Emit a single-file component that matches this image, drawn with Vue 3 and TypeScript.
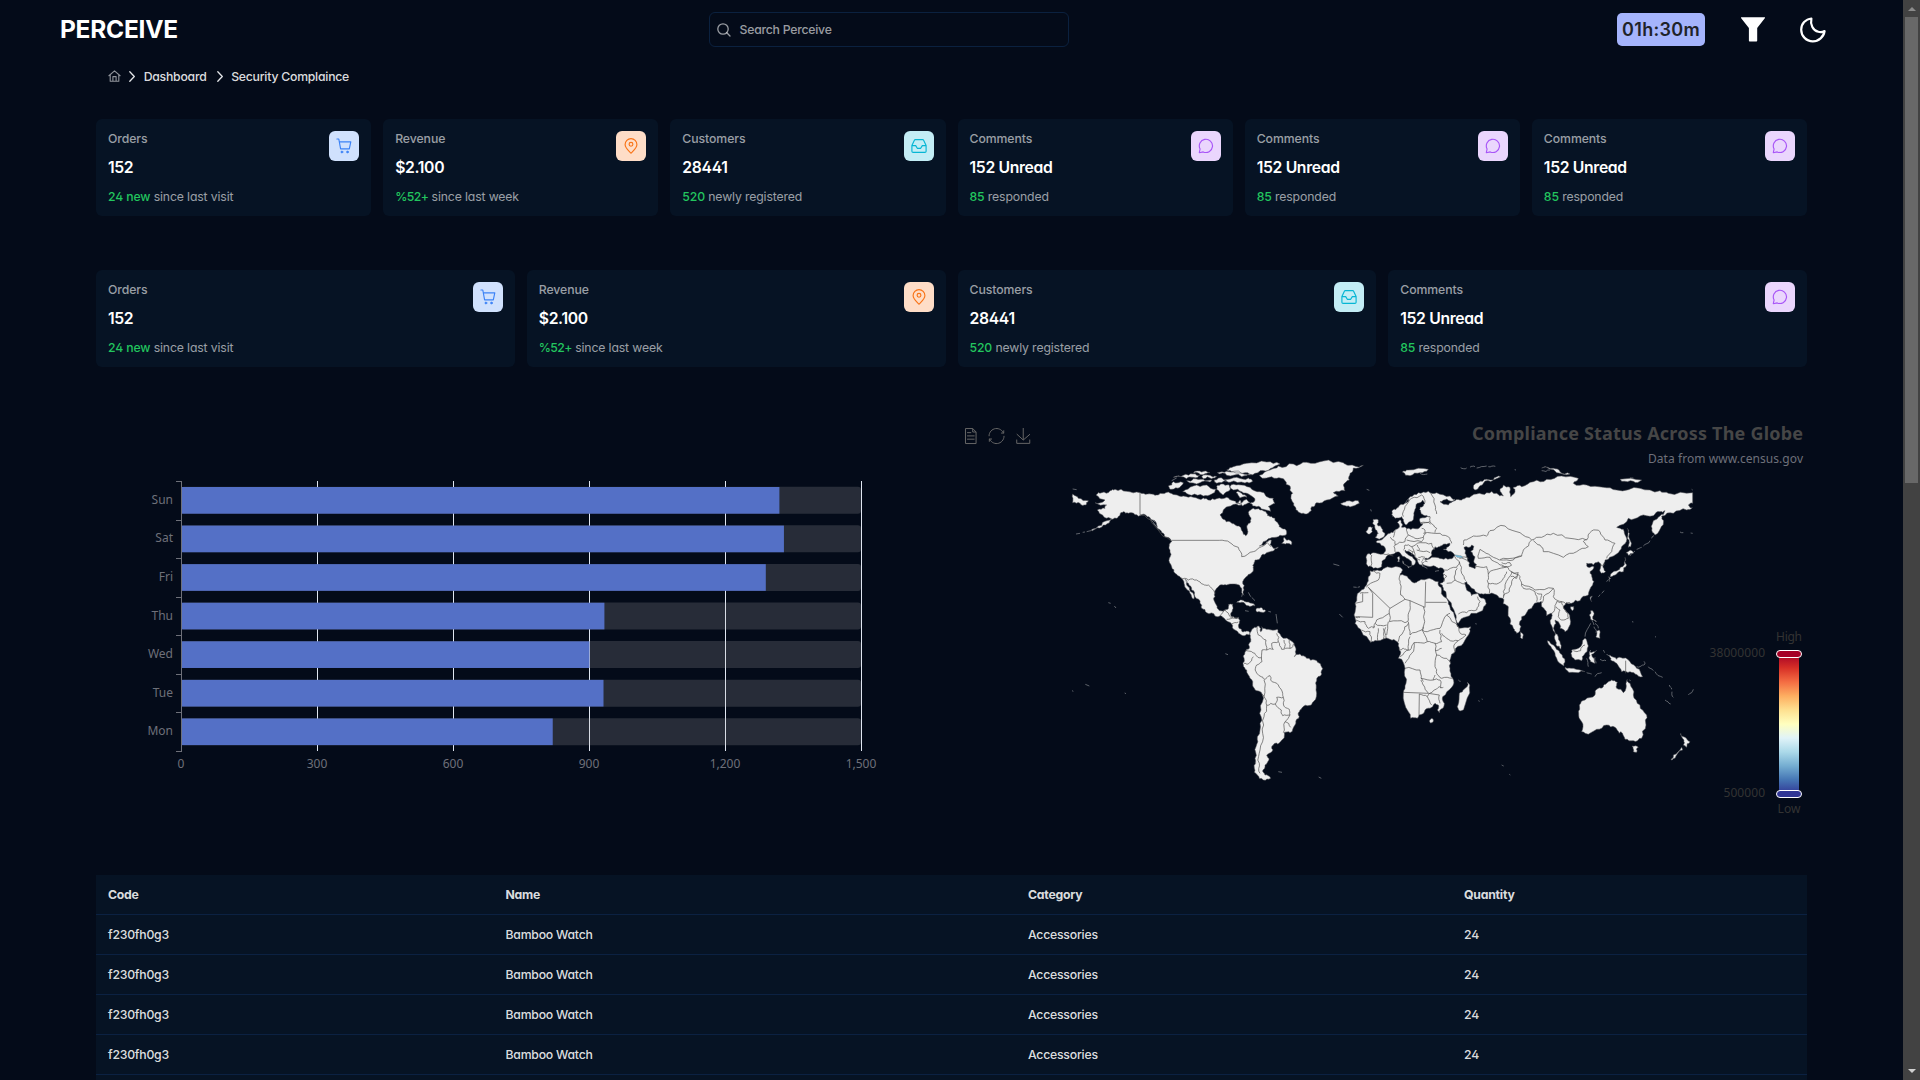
<script setup lang="ts">
type IconName = 'cart' | 'pin' | 'inbox' | 'comment'

interface Stat {
  label: string
  value: string
  strong: string
  rest: string
  icon: IconName
}

const orders: Stat = { label: 'Orders', value: '152', strong: '24 new', rest: 'since last visit', icon: 'cart' }
const revenue: Stat = { label: 'Revenue', value: '$2.100', strong: '%52+', rest: 'since last week', icon: 'pin' }
const customers: Stat = { label: 'Customers', value: '28441', strong: '520', rest: 'newly registered', icon: 'inbox' }
const comments: Stat = { label: 'Comments', value: '152 Unread', strong: '85', rest: 'responded', icon: 'comment' }

const statRows: Stat[][] = [
  [orders, revenue, customers, comments, comments, comments],
  [orders, revenue, customers, comments],
]

const week = [
  { day: 'Sun', value: 1320 },
  { day: 'Sat', value: 1330 },
  { day: 'Fri', value: 1290 },
  { day: 'Thu', value: 934 },
  { day: 'Wed', value: 901 },
  { day: 'Tue', value: 932 },
  { day: 'Mon', value: 820 },
]
const ticks = ['0', '300', '600', '900', '1,200', '1,500']
const band = 270 / 7
const plotX = 85
const plotY = 61

const products = Array.from({ length: 4 }, () => ({
  code: 'f230fh0g3',
  name: 'Bamboo Watch',
  category: 'Accessories',
  quantity: 24,
}))

// Map geometry: "x,y x,y ..." rings; west and east halves use their own origin.
const westLand = [
  '108,135 125,128 150,122 165,118 200,124 240,128 262,132 285,136 300,130 325,126 345,134 370,138 400,142 430,144 445,150 470,146 500,142 520,152 530,160 540,150 545,165 512,168 490,180 480,195 490,208 510,215 525,224 540,230 548,245 557,257 562,240 560,228 572,215 570,200 565,188 572,180 580,175 600,180 620,190 630,200 645,205 655,222 665,235 680,245 678,255 655,260 630,265 610,275 598,288 620,275 635,272 630,285 640,295 655,292 640,303 620,308 605,315 600,325 585,330 578,345 580,360 570,372 555,385 548,395 552,420 552,436 545,428 538,405 520,402 500,405 480,405 468,418 465,440 466,460 475,478 490,484 503,478 506,463 518,462 517,480 512,492 515,500 535,502 538,520 537,535 548,546 560,543 570,548 568,554 555,557 540,552 525,540 515,522 495,508 480,497 465,498 440,488 425,475 420,460 405,440 395,420 385,400 375,388 380,405 392,425 402,447 395,440 382,420 372,400 363,384 345,370 335,350 328,325 330,300 328,283 335,275 320,262 310,250 298,238 290,225 278,210 262,200 245,194 225,194 205,190 190,185 180,195 170,205 150,213 130,225 105,238 90,243 125,226 150,210 155,207 135,203 118,190 112,180 135,175 140,165 105,158 135,150',
  '598,76 630,60 655,48 700,42 740,37 790,33 850,38 865,46 910,46 880,54 870,70 868,90 850,105 855,122 820,128 835,138 800,150 770,158 755,170 745,190 735,192 715,186 705,170 695,150 698,130 690,108 675,92 650,85 620,84',
  '842,160 860,153 895,152 898,160 870,171 850,166',
  '500,60 520,50 560,40 620,36 660,42 630,56 600,62 585,70 555,68 520,66',
  '472,68 500,64 545,70 575,74 545,80 500,76',
  '510,110 535,104 570,112 600,125 640,145 645,160 625,170 632,184 610,178 590,170 570,160 585,150 570,135 545,125 520,120',
  '368,125 400,108 440,105 467,118 455,132 430,138 395,136',
  '325,108 340,95 370,98 360,112 335,118',
  '340,82 370,76 400,72 420,74 400,82 380,86',
  '400,70 425,66 450,68 430,74',
  '380,92 400,86 430,88 455,90 450,96 420,98',
  '425,80 450,76 470,80 455,86 430,86',
  '462,90 490,88 500,94 470,100',
  '470,108 485,102 505,104 510,120 490,135 478,125',
  '490,88 530,82 565,84 578,94 555,99 510,97',
  '530,158 560,148 570,158 548,168',
  '528,128 545,130 560,142 540,144',
  '665,280 672,262 692,272 694,284 680,280',
  '38,132 55,145 85,152 78,165 60,160 38,158',
  '530,457 545,450 565,456 585,468 565,467 550,457',
  '590,475 605,473 617,482 600,486 588,483',
  '568,550 580,535 597,528 602,545 605,530 625,538 652,538 660,552 670,565 690,570 702,580 708,600 703,620 720,612 740,625 765,630 782,642 788,655 785,672 770,692 768,720 760,755 750,766 725,775 718,785 716,805 705,825 690,848 672,848 673,862 660,877 645,880 635,892 635,905 620,915 627,930 615,945 608,962 615,975 632,985 610,990 592,975 583,955 585,925 588,890 592,860 600,820 603,780 606,732 590,722 578,708 570,685 560,660 550,645 553,632 555,605 568,595 572,575',
]
const westBorders = [
  '592,532 595,555 618,570 620,600', '555,603 575,605 590,618 606,625', '552,640 565,642 580,620',
  '620,600 640,598 635,580 655,575 650,550', '655,575 665,598 690,595 702,580', '672,570 672,596', '688,570 690,595',
  '620,600 606,600 606,635 590,645 588,665 600,678 612,688 630,677 632,690 655,705 668,730 670,742 650,742 646,762 620,766 612,740 612,690',
  '606,732 612,740', '620,766 612,800 608,850 600,900 598,940 600,970',
  '670,742 670,762 688,778 690,795 668,797 664,780 646,762', '690,795 675,815 692,832', '675,815 670,848',
  '478,271 510,278 535,292 545,320 580,305 605,290 622,278 632,290', '240,194 262,205 290,235 320,262 335,275',
  '363,384 385,390 410,390 430,403 445,405 465,430', '480,497 495,480 510,500 535,505', '500,508 520,500', '515,522 535,516',
]
const westStraight = ['335,271 478,271', '240,129 240,194']
const westSpecks = [
  '48,252 60,250', '68,247 75,246', '80,245 92,242', '38,117 50,119', '145,458 152,460', '163,468 168,474', '496,611 504,614',
  '565,427 572,440', '575,442 585,452', '648,492 652,520', '555,482 566,484', '625,484 633,486', '880,411 890,412', '893,412 900,410',
  '838,492 848,502', '655,965 666,967', '776,981 784,985', '820,342 838,347', '36,722 40,724', '76,703 88,708', '194,729 198,731',
  '420,120 400,114', '265,196 285,216', '280,220 300,242', '270,205 290,230', '586,935 588,962', '600,980 622,985', '335,92 350,84', '545,440 548,430',
  '920,118 928,121', '932,178 934,184',
]
const eastLand = [
  '82,312 100,308 130,312 137,300 120,280 108,275 130,265 150,250 165,240 178,232 172,218 182,210 188,225 185,232 200,236 225,236 240,232 248,222 240,215 240,205 270,200 250,195 242,185 240,172 255,160 248,150 232,160 225,178 222,195 210,215 198,225 190,208 185,200 165,205 155,195 158,180 175,172 195,160 210,140 235,128 265,124 290,128 330,138 345,148 330,153 310,150 300,155 325,165 345,152 365,150 380,142 410,132 440,128 470,130 490,138 480,118 490,105 510,112 512,140 525,125 520,112 545,110 580,95 620,88 665,78 715,85 700,100 740,105 790,112 830,120 900,115 960,122 985,130 1058,128 1058,160 1045,165 1057,173 1040,180 1000,190 965,198 970,210 965,228 945,255 936,235 940,212 960,198 975,182 960,185 940,197 900,198 865,205 830,232 850,238 858,260 850,285 835,308 815,320 795,330 790,345 797,365 785,370 782,350 775,335 760,345 740,340 745,352 762,350 750,365 757,385 758,405 745,435 720,452 695,460 680,458 670,470 685,490 692,515 675,545 660,535 655,515 645,510 642,530 645,550 660,575 662,598 648,585 643,560 638,535 635,505 635,490 620,498 615,480 605,455 590,458 575,475 545,500 543,530 530,550 520,535 510,505 505,470 490,462 488,445 470,435 440,432 420,432 395,415 380,395 374,398 388,425 395,437 413,430 418,440 437,455 430,475 410,490 380,500 355,520 350,515 345,490 325,450 310,420 307,405 300,400 312,390 310,380 312,360 290,352 270,350 245,335 250,325 285,322 305,326 330,326 345,318 325,305 310,298 325,290 330,280 310,283 300,290 285,290 275,305 270,320 255,325 262,335 248,338 250,350 240,345 230,325 215,310 195,300 205,315 225,330 222,345 212,350 215,340 200,325 180,308 165,310 145,315 130,330 125,350 100,355 85,350',
  '100,208 115,210 112,225 125,235 135,250 130,262 105,262 115,250 105,235 98,220',
  '78,245 85,232 98,232 97,245 85,252',
  '90,362 105,362 130,356 180,352 188,360 180,375 205,385 230,397 240,390 258,388 295,395 305,420 325,455 332,480 350,520 358,535 392,530 390,545 370,580 345,605 332,625 330,655 338,685 335,712 308,740 312,768 298,788 292,780 295,765 285,760 275,772 255,780 237,795 232,805 212,805 205,785 190,730 198,700 195,655 175,625 178,600 172,575 150,568 110,572 92,577 65,545 45,520 42,495 45,460 60,425 80,405 85,380',
  '268,812 278,806 280,814 272,819', '382,697 388,712 372,775 360,783 354,765 358,730 372,718',
  '542,545 550,555 548,566 541,562', '400,112 415,98 440,88 482,80 460,90 430,100 415,115 405,120',
  '187,66 205,60 265,58 240,68 210,77', '605,54 640,55 660,65 690,72 650,68', '840,88 905,90 880,94 845,94',
  '862,235 868,250 872,290 865,292 862,265', '858,308 870,300 880,310 865,316',
  '855,322 860,345 850,365 830,372 810,380 812,372 835,360 848,350', '805,380 812,385 808,395', '752,440 757,438 755,455',
  '692,470 702,470 698,482', '752,482 760,485 758,505 770,515 752,508', '770,545 778,540 780,565 768,560',
  '622,572 640,585 660,610 675,635 672,648 650,625 635,595', '675,652 700,655 735,665 715,668 680,660',
  '695,600 715,595 735,565 742,580 735,610 725,632 705,630 693,610', '748,605 770,600 755,613 765,640 752,635 748,620',
  '808,615 830,628 840,622 870,635 890,655 908,680 885,672 870,665 845,665 830,640 812,630',
  '718,765 735,750 765,735 775,715 790,710 800,700 815,690 832,697 830,715 850,728 858,715 862,688 870,700 880,735 900,765 920,795 918,825 905,865 880,872 855,868 842,845 838,850 825,832 800,825 770,838 735,850 725,845 725,815 716,790',
  '876,888 895,892 890,907 880,905', '1022,850 1035,862 1050,875 1040,892 1030,885 1032,870', '1025,892 1028,900 1005,925 993,930 1000,915',
  '188,332 198,345 206,350 215,348 205,354', '172,322 177,318 178,335 173,335',
]
const seas = ['372,292 395,285 402,290 392,305 405,320 402,330 410,345 405,356 388,350 382,330 375,310']
const eastBorders = [
  '100,364 120,370 115,390 85,405 80,412', '180,375 180,400 182,435 195,448', '60,430 85,428',
  '148,490 120,505 105,520 100,535', '150,475 148,490 148,515 195,518 205,510 210,480 210,452', '250,470 250,530 245,540 210,555 205,515',
  '245,540 262,545 300,535 305,525', '250,530 262,575 285,580 305,575 300,540', '305,525 320,495 330,490',
  '320,495 355,530 358,545 378,555 355,572 325,568 305,550', '355,572 342,585 342,610', '262,575 222,578 215,610 195,640',
  '178,600 190,595 205,600 210,560', '195,655 240,660 243,685 250,695', '285,580 290,615 285,650 290,670 305,685 338,685',
  '290,615 320,625 332,635', '243,685 280,690 285,675', '265,730 250,705 243,690', '238,732 262,740 275,765',
  '262,740 280,722 298,710 310,712', '298,735 300,760', '280,690 300,690 303,715', '285,600 305,595', '130,535 130,568',
  '115,535 113,572', '137,532 138,565', '145,515 140,555', '92,577 90,545 65,540', '48,510 75,515 85,535 105,530',
  '105,520 140,525', '175,575 190,545 205,520', '180,620 210,600 222,578', '43,500 60,502',
  '370,285 372,270 400,258 440,258 450,242 495,228 540,248 575,270 605,262 640,250 690,265 740,270 755,243 780,245 795,270 825,280 815,305 800,325',
  '580,272 600,285 610,305 670,322 710,305 745,290 730,275 740,268', '575,270 550,300 545,318 490,325 478,330 445,312 420,298 415,325',
  '415,325 450,322 480,345 500,350', '480,330 520,330 545,318', '485,338 510,338 515,345 485,350',
  '500,350 515,365 540,380 545,402 585,420 640,415 640,440 665,455 690,458', '545,402 550,415 585,425 590,455', '590,428 605,432 600,450',
  '515,365 505,385 490,425 490,445', '358,335 365,370 378,392', '405,350 440,350 445,372 480,355 500,350',
  '445,372 442,392 448,430', '445,400 470,402 490,385 500,365', '312,360 350,352 358,335 345,320', '320,400 345,390 352,355',
  '345,390 375,402', '355,492 380,488 410,480 420,455 412,440', '535,375 515,395 508,425 490,440', '515,365 535,368 530,385 512,380', '640,415 610,440 605,460',
  '635,490 645,470 650,455 665,455 675,480 685,505 665,510 655,500 660,480 648,470', '358,325 385,335', '360,318 385,325', '312,395 320,378 312,372',
  '130,312 160,318', '95,315 92,350', '150,262 165,275 162,290 168,308', '165,240 160,262', '200,236 205,255 195,275 165,285',
  '205,255 225,265 250,262 255,240 245,235', '250,262 245,275 200,270', '195,285 215,290 240,278 275,280 285,300',
  '215,290 225,320 240,330', '230,300 270,308', '250,250 300,250 330,265 335,280', '245,222 270,215 290,235 285,248',
  '270,200 270,215', '290,192 285,165 272,130', '190,200 195,170 215,145 245,135 255,158', '195,285 190,300', '780,348 795,342', '242,218 272,222', '205,300 220,305 215,315', '235,322 255,322', '232,285 238,300', '700,602 722,602 735,585',
]
const eastStraight = [
  '85,412 150,475 195,448 210,452 255,472 257,395', '257,457 320,457', '85,412 98,430 98,502 48,500', '68,430 68,455 45,460',
  '190,727 265,730 298,735', '238,732 237,795', '857,632 857,670',
]
const eastSpecks = [
  '362,53 380,54', '390,52 405,50', '410,54 440,48', '445,50 466,49', '524,59 528,60', '925,650 940,662', '945,665 968,682',
  '975,750 992,762', '1045,735 1060,718', '890,650 900,650 915,642 912,634', '740,668 755,672', '765,680 785,668', '765,622 768,640', '790,600 794,608',
  '780,628 798,632', '800,612 815,620', '988,705 995,718', '996,725 1000,742', '735,560 752,520', '765,520 775,535', '762,530 768,548', '756,512 762,525',
  '870,318 885,303', '890,298 905,292', '910,288 930,272', '935,265 942,257', '485,945 491,948', '508,973 511,975', '415,752 419,754', '425,747 428,748',
  '876,515 880,516', '945,560 948,561', '1020,246 1030,248', '1052,249 1058,250', '355,690 362,694', '406,521 410,522', '785,430 792,422', '775,440 780,434',
  '245,345 262,356', '285,364 297,362', '258,345 265,338', '255,330 262,345', '800,395 806,388', '605,62 630,60', '160,190 158,200', '195,160 210,146', '868,690 872,692', '740,625 745,650', '750,610 752,600', '1055,118 1058,120', '240,70 262,72', '870,84 880,84',
]

// Midpoint displacement with a fixed seed gives straight segments an irregular coastline.
let seed = 7
function rand(): number {
  seed = (seed * 16807) % 2147483647
  return seed / 2147483647 - 0.5
}
function rough(points: string, closed: boolean, amount: number): string {
  let pts = points.split(' ').map((p) => p.split(',').map(Number))
  for (let pass = 0; pass < 2; pass++) {
    const next: number[][] = []
    pts.forEach((p, i) => {
      next.push(p)
      if (!closed && i === pts.length - 1) return
      const q = pts[(i + 1) % pts.length]
      const len = Math.hypot(q[0] - p[0], q[1] - p[1])
      if (len < 6 || (p[0] > 1056 && q[0] > 1056)) return
      const d = Math.min(len, 24) * amount * rand()
      next.push([(p[0] + q[0]) / 2 - ((q[1] - p[1]) / len) * d, (p[1] + q[1]) / 2 + ((q[0] - p[0]) / len) * d])
    })
    pts = next
  }
  return 'M' + pts.map((p) => p[0].toFixed(1) + ',' + p[1].toFixed(1)).join('L') + (closed ? 'Z' : '')
}
const land = (rings: string[]) => rings.map((r) => rough(r, true, 0.46)).join('')
const lines = (rings: string[]) => rings.map((r) => rough(r, false, 0.35)).join('')
const plain = (rings: string[]) => rings.map((r) => 'M' + r.replace(/ /g, 'L')).join('')

const halves = [
  { shift: 'translate(0 0)', land: land(westLand), seas: '', borders: lines(westBorders) + plain(westStraight), specks: plain(westSpecks) },
  { shift: 'translate(840 0)', land: land(eastLand), seas: land(seas), borders: lines(eastBorders) + plain(eastStraight), specks: lines(eastSpecks) },
]

const ramp = ['#a50026', '#d73027', '#f46d43', '#fdae61', '#fee090', '#ffffbf', '#e0f3f8', '#abd9e9', '#74add1', '#4575b4', '#313695']
</script>

<template>
  <div class="screen">
    <div class="page">
      <header class="topbar">
        <div class="brand">PERCEIVE</div>
        <div class="search">
          <svg width="14" height="14" viewBox="0 0 14 14" fill="none" stroke="currentColor" stroke-width="1.3" stroke-linecap="round">
            <circle cx="6" cy="6" r="5.2" /><path d="M9.8 9.8 13 13" />
          </svg>
          <span>Search Perceive</span>
        </div>
        <div class="tools">
          <div class="timer">01h:30m</div>
          <svg class="funnel" width="24" height="25" viewBox="0 0 24 25"><path d="M.6.2h22.8c.6 0 .8.5.4 1L16.2 11v12.600c0 .6-.4 1-1 1H8.900c-.6 0-1-.4-1-1V11L.2 1.200C-.2.7 0 .2.6.2Z" fill="#fff" /></svg>
          <svg class="moon" width="26" height="26" viewBox="0 0 26 26" fill="none" stroke="#fff" stroke-width="2.200" stroke-linejoin="round"><path d="M11.400 1.500C5.600 2 1.200 6.900 1.200 12.700c0 6.300 5.100 11.600 11.600 11.600 5.900 0 11-4.500 11.800-10.300-2 1.200-4.200 1.400-6.300.8C13 13.500 10 7.500 11.400 1.500Z" /></svg>
        </div>
      </header>

      <nav class="crumbs">
        <svg class="home" width="13" height="12" viewBox="0 0 13 12" fill="none" stroke="#90949b" stroke-width="1.1" stroke-linejoin="round"><path d="M.6 6 6.500.9 12.400 6M2.200 4.900v6.400h8.600V4.900M4.900 11.200V6.600h3.200v4.600" /></svg>
        <svg width="6" height="11" viewBox="0 0 6 11" fill="none" stroke="#e4e6e9" stroke-width="1.3" stroke-linecap="round" stroke-linejoin="round"><path d="m.8.8 4.500 4.700L.8 10.200" /></svg>
        <span>Dashboard</span>
        <svg width="6" height="11" viewBox="0 0 6 11" fill="none" stroke="#e4e6e9" stroke-width="1.3" stroke-linecap="round" stroke-linejoin="round"><path d="m.8.8 4.500 4.700L.8 10.200" /></svg>
        <span>Security Complaince</span>
      </nav>

      <section v-for="(row, r) in statRows" :key="r" class="stats">
        <article v-for="(s, i) in row" :key="i" class="card">
          <div class="card-text">
            <div class="label">{{ s.label }}</div>
            <div class="value">{{ s.value }}</div>
            <div class="sub"><b :class="{ tight: s.icon === 'pin' }">{{ s.strong }}</b> {{ s.rest }}</div>
          </div>
          <div class="badge" :class="s.icon">
            <svg width="16" height="16" viewBox="0 0 16 16" fill="none" stroke="currentColor" stroke-width="1.150" stroke-linecap="round" stroke-linejoin="round">
              <template v-if="s.icon === 'cart'">
                <path d="M.9 1h1.900l1.800 9.900h8.500M3.300 3.800h11.500l-1.500 7.100" />
                <circle cx="5.900" cy="14" r="1" fill="currentColor" stroke-width=".6" /><circle cx="11.500" cy="14" r="1" fill="currentColor" stroke-width=".6" />
              </template>
              <template v-else-if="s.icon === 'pin'">
                <path d="M8 15.200C5.200 12.400 2.100 9.900 2.100 6.500a5.900 5.900 0 0 1 11.800 0C13.900 9.900 10.800 12.400 8 15.200Z" /><circle cx="8" cy="6.300" r="1.900" />
              </template>
              <template v-else-if="s.icon === 'inbox'">
                <path d="M.9 7.600 3.400 2.200c.2-.4.500-.600.9-.600h7.400c.4 0 .7.200.9.600l2.500 5.400v5.600c0 .7-.5 1.200-1.200 1.200H2.100c-.7 0-1.200-.5-1.200-1.200ZM.9 7.600h3.800l1.600 2.700h3.400l1.600-2.700h3.800" />
              </template>
              <path v-else d="M1.300 14.700 2.100 11A6.600 6.600 0 1 1 5.200 13.900Z" />
            </svg>
          </div>
        </article>
      </section>

      <section class="charts">
        <svg class="bars" width="850" height="420" viewBox="0 0 850 420">
          <g shape-rendering="crispEdges">
            <rect v-for="(t, i) in ticks.slice(1)" :key="t" :x="plotX + (i + 1) * 136" :y="plotY" width="1" height="270" fill="#e0e6f1" />
          </g>
          <g v-for="(d, i) in week" :key="d.day">
            <rect :x="plotX" :y="plotY + i * band + 5.800" width="680" height="27" rx="3" fill="rgba(180,180,180,.2)" />
            <rect :x="plotX" :y="plotY + i * band + 6" :width="(d.value / 1500) * 680" height="26.700" fill="#5470c6" />
            <text :x="plotX - 8" :y="plotY + (i + 0.5) * band + 3.600" class="axis end">{{ d.day }}</text>
          </g>
          <g fill="#6e7079" shape-rendering="crispEdges">
            <rect :x="plotX" :y="plotY" width="1" height="271" />
            <rect v-for="n in 8" :key="n" :x="plotX - 5" :y="plotY + Math.round((n - 1) * band)" width="5" height="1" />
          </g>
          <text v-for="(t, i) in ticks" :key="t" :x="plotX + i * 136" :y="plotY + 287" class="axis mid">{{ t }}</text>
        </svg>

        <svg class="world" width="861" height="420" viewBox="0 0 861 420">
          <g fill="none" stroke="#666" stroke-width="1">
            <path transform="translate(16.400 8) scale(.268)" vector-effect="non-scaling-stroke" d="M17.500,17.300H33 M45.400,29.500h-28 M11.500,2v56H51V14.800L38.400,2H11.500z M38.400,2.200v12.700H51 M45.400,41.700h-28" />
            <path transform="translate(42.500 8) scale(.268)" vector-effect="non-scaling-stroke" d="M47,18.900h9.800V8.700 M56.300,20.100 C52.100,9,40.500,0.600,26.800,2.100C12.600,3.700,1.600,16.200,2.100,30.600 M13,41.100H3.100v10.200 M3.700,39.900c4.200,11.100,15.800,19.500,29.500,18 c14.200-1.600,25.200-14.100,24.700-28.500" />
            <path transform="translate(69.500 8) scale(.265)" vector-effect="non-scaling-stroke" d="M4.700,22.900L29.300,45.500L54.700,23.400M4.600,43.600L4.600,58L53.800,58L53.800,43.600M29.200,45.100L29.200,0" />
          </g>
          <svg x="114" y="30" width="640" height="350" viewBox="0 0 1920 1050">
            <g v-for="h in halves" :key="h.shift" :transform="h.shift" stroke-linejoin="round">
              <path :d="h.specks" fill="none" stroke="#8b8e92" stroke-width="2" />
              <path :d="h.land" fill="#eee" stroke="#505256" stroke-width="1.600" />
              <path :d="h.seas" fill="#040b19" stroke="#505256" stroke-width="1.500" />
              <path :d="h.borders" fill="none" stroke="#555" stroke-width="2.100" />
            </g>
            <path d="M1183,314 1205,318 1209,323 1191,322Z" fill="#74bfe0" stroke="#666" />
          </svg>
          <text x="857" y="20" class="title" textLength="331">Compliance Status Across The Globe</text>
          <text x="857" y="43" class="subtitle" textLength="155">Data from www.census.gov</text>
          <defs>
            <linearGradient id="ramp" x1="0" y1="0" x2="0" y2="1">
              <stop v-for="(c, i) in ramp" :key="c" :offset="i / 10" :stop-color="c" />
            </linearGradient>
          </defs>
          <rect x="833" y="234" width="20" height="140" fill="url(#ramp)" />
          <rect x="830.500" y="230.500" width="25" height="7" rx="3.500" fill="#a50026" stroke="#fff" />
          <rect x="830.500" y="370.500" width="25" height="7" rx="3.500" fill="#313695" stroke="#fff" />
          <text x="843" y="221" class="scale mid" textLength="26">High</text>
          <text x="819" y="237" class="scale end" textLength="55.500">38000000</text>
          <text x="819" y="377" class="scale end" textLength="41.500">500000</text>
          <text x="843" y="393" class="scale mid" textLength="23">Low</text>
        </svg>
      </section>

      <div class="grid-box">
        <table class="grid">
          <thead>
            <tr><th class="c1">Code</th><th class="c2">Name</th><th class="c3">Category</th><th>Quantity</th></tr>
          </thead>
          <tbody>
            <tr v-for="(p, i) in products" :key="i">
              <td>{{ p.code }}</td><td>{{ p.name }}</td><td>{{ p.category }}</td><td>{{ p.quantity }}</td>
            </tr>
          </tbody>
        </table>
      </div>
    </div>

    <aside class="scrollbar">
      <i class="arrow up"></i>
      <div class="thumb"></div>
      <i class="arrow down"></i>
    </aside>
  </div>
</template>

<style>
html,
body {
  background: #040b19;
  overflow: hidden;
}
</style>

<style scoped>
.screen {
  display: flex;
  width: 1920px;
  height: 1080px;
  overflow: hidden;
  background: #040b19;
  font-family: Inter, "Liberation Sans", sans-serif;
  font-feature-settings: "cv02", "cv03", "cv04", "cv11";
  font-size: 12.250px;
  color: rgba(255, 255, 255, 0.87);
}
.page {
  width: 1903px;
  height: 1080px;
  overflow: hidden;
}
.topbar {
  display: flex;
  align-items: center;
  height: 59px;
  padding-left: 60px;
}
.brand {
  width: 649px;
  padding-bottom: 2px;
  font-size: 24.500px;
  font-weight: 700;
  letter-spacing: -0.260px;
  color: #fff;
}
.search {
  box-sizing: border-box;
  display: flex;
  align-items: center;
  gap: 8.500px;
  width: 360px;
  height: 35px;
  padding-left: 7px;
  border: 1px solid #0b213f;
  border-radius: 6px;
  color: rgba(255, 255, 255, 0.6);
  font-weight: 500;
  letter-spacing: -0.240px;
}
.search svg {
  flex: none;
}
.tools {
  display: flex;
  align-items: center;
  margin-left: 548px;
}
.timer {
  width: 88px;
  height: 33px;
  border-radius: 5px;
  background: #a5b4fc;
  color: #1f2329;
  font-size: 18px;
  font-weight: 600;
  letter-spacing: 0.300px;
  line-height: 33px;
  text-align: center;
}
.funnel {
  margin-left: 36px;
}
.moon {
  margin-left: 35px;
}
.crumbs {
  display: flex;
  align-items: center;
  height: 34px;
  padding: 0 0 2px 107.500px;
  font-weight: 500;
  letter-spacing: -0.240px;
}
.crumbs svg {
  margin-right: 8.600px;
}
.crumbs span {
  margin-right: 10px;
}
.stats {
  display: flex;
  gap: 12px;
  margin: 24px 96px 54px;
}
.stats + .stats {
  margin-top: 0;
}
.card {
  box-sizing: border-box;
  display: flex;
  justify-content: space-between;
  flex: 1 1 0;
  height: 97px;
  padding: 12px;
  border-radius: 6px;
  background: #061324;
}
.card-text {
  margin-top: -1px;
}
.label {
  margin-bottom: 12px;
  line-height: 17px;
  color: rgba(255, 255, 255, 0.6);
  font-weight: 500;
  letter-spacing: -0.080px;
}
.value {
  margin-bottom: 12px;
  font-size: 15.750px;
  font-weight: 600;
  letter-spacing: -0.350px;
  line-height: 17px;
  color: #fff;
}
.sub {
  line-height: 17px;
  letter-spacing: -0.140px;
  color: rgba(255, 255, 255, 0.6);
}
.sub b {
  color: #22c55e;
  font-weight: 500;
}
.sub b.tight {
  letter-spacing: -0.600px;
}
.badge {
  display: flex;
  align-items: center;
  justify-content: center;
  width: 30px;
  height: 30px;
  border-radius: 6px;
}
.badge.cart {
  background: #d0e1fd;
  color: #3b82f6;
}
.badge.pin {
  background: #feddc7;
  color: #f97316;
}
.badge.inbox {
  background: #c3edf5;
  color: #06b6d4;
}
.badge.comment {
  background: #ead6fd;
  color: #a855f7;
}
.charts {
  display: flex;
  height: 420px;
  margin: -1px 96px 35px;
}
.axis,
.scale,
.title,
.subtitle {
  font-family: "Noto Sans", "Open Sans", sans-serif;
  font-size: 12px;
  fill: #6e7079;
}
.title {
  font-size: 18px;
  font-weight: 700;
  fill: #464646;
  text-anchor: end;
}
.subtitle {
  fill: #6e7079;
  text-anchor: end;
}
.scale {
  fill: #333;
}
.end {
  text-anchor: end;
}
.mid {
  text-anchor: middle;
}
.grid-box {
  height: 205px;
  margin: 0 96px;
  background: #061324;
}
.grid {
  width: 1711px;
  border-collapse: separate;
  border-spacing: 0;
  table-layout: fixed;
  font-weight: 500;
  letter-spacing: -0.230px;
}
.grid th,
.grid td {
  box-sizing: border-box;
  height: 40px;
  padding: 0 12px;
  border-bottom: 1px solid #0b2142;
  text-align: left;
}
.grid th {
  font-weight: 700;
}
.c1 {
  width: 397.500px;
}
.c2 {
  width: 522.500px;
}
.c3 {
  width: 436px;
}
.scrollbar {
  display: flex;
  flex-direction: column;
  align-items: center;
  width: 17px;
  height: 1080px;
  background: #424242;
}
.arrow {
  width: 0;
  height: 0;
  border-left: 4px solid transparent;
  border-right: 4px solid transparent;
}
.up {
  margin-top: 7px;
  border-bottom: 4px solid #8b8b8b;
}
.thumb {
  width: 13px;
  height: 466px;
  margin-top: 6px;
  background: #686868;
}
.down {
  margin-top: auto;
  margin-bottom: 7px;
  border-top: 4px solid #d0d0d0;
}
</style>
